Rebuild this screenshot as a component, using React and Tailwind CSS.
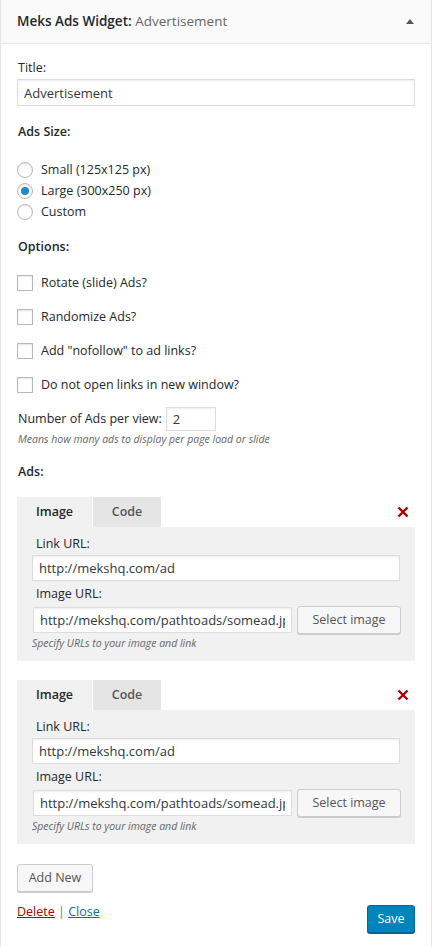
import { useState } from "react";

const font = "font-['Open_Sans','Liberation_Sans',sans-serif]";
const inputCls =
  "border border-[#ddd] bg-white px-[6px] text-[13px] text-[#32373c] shadow-[inset_0_1px_2px_rgba(0,0,0,0.07)] outline-none";

function Radio({ checked, label }) {
  return (
    <label className="flex h-[21px] items-center gap-[8px]">
      <span className="flex h-[16px] w-[16px] items-center justify-center rounded-full border border-[#b4b9be] bg-white shadow-[inset_0_1px_2px_rgba(0,0,0,0.1)]">
        {checked ? <span className="h-[8px] w-[8px] rounded-full bg-[#1e8cbe]" /> : null}
      </span>
      <span>{label}</span>
    </label>
  );
}

function Checkbox({ label }) {
  return (
    <label className="flex h-[34px] items-center gap-[8px]">
      <span className="h-[16px] w-[16px] border border-[#b4b9be] bg-white shadow-[inset_0_1px_2px_rgba(0,0,0,0.1)]" />
      <span>{label}</span>
    </label>
  );
}

function AdBox() {
  return (
    <div className="w-full">
      <div className="flex h-[30px] items-stretch">
        <div className="flex w-[75px] items-center justify-center bg-[#f1f1f1] font-semibold text-[#23282d]">
          Image
        </div>
        <div className="ml-px flex w-[68px] items-center justify-center bg-[#e5e5e5] font-semibold text-[#555]">
          Code
        </div>
        <div className="flex flex-1 items-center justify-end pr-[6px]">
          <svg width="12" height="12" viewBox="0 0 12 12">
            <path d="M1.5 1.5 L10.5 10.5 M10.5 1.5 L1.5 10.5" stroke="#a00" strokeWidth="2.4" />
          </svg>
        </div>
      </div>
      <div className="bg-[#f1f1f1] px-[15px] pb-[10px] pt-[8px]">
        <div className="pl-[4px] leading-[18px]">Link URL:</div>
        <input readOnly value="http://mekshq.com/ad" className={`${inputCls} mt-[2px] h-[26px] w-full`} />
        <div className="mt-[4px] pl-[4px] leading-[18px]">Image URL:</div>
        <div className="mt-[3px] flex items-center gap-[5px] pl-px">
          <input
            readOnly
            value="http://mekshq.com/pathtoads/somead.jpg"
            className={`${inputCls} h-[26px] w-[259px] min-w-0 flex-none`}
          />
          <button className="h-[28px] w-[104px] flex-none rounded-[3px] border border-[#ccc] bg-[#f7f7f7] text-[12.5px] text-[#555] shadow-[0_1px_0_#ccc]">
            Select image
          </button>
        </div>
        <div className="mt-[1px] text-[10.5px] italic leading-[16px] text-[#666]">
          Specify URLs to your image and link
        </div>
      </div>
    </div>
  );
}

export default function App() {
  const [title] = useState("Advertisement");

  return (
    <div className={`${font} min-h-[947px] w-[432px] border-x border-[#e5e5e5] bg-white text-[12.5px] text-[#23282d]`}>
      <div className="flex h-[44px] items-center justify-between border-b border-[#e5e5e5] bg-[#fafafa] pl-[16px] pr-[17px]">
        <h3 className="text-[13.5px] leading-none">
          <span className="font-semibold text-[#23282d]">Meks Ads Widget:</span>{" "}
          <span className="text-[#666]">{title}</span>
        </h3>
        <span className="h-0 w-0 border-x-[4px] border-b-[5px] border-x-transparent border-b-[#555]" />
      </div>

      <div className="px-[16px] leading-[18px]">
        <div className="pl-px pt-[15px]">Title:</div>
        <input readOnly value={title} className={`${inputCls} mt-[2px] h-[27px] w-full`} />

        <div className="mt-[17px] pl-px font-semibold">Ads Size:</div>
        <div className="mt-[18px]">
          <Radio label="Small (125x125 px)" />
          <Radio checked label="Large (300x250 px)" />
          <Radio label="Custom" />
        </div>

        <div className="mt-[16px] pl-px font-semibold">Options:</div>
        <div className="mt-[10px]">
          <Checkbox label="Rotate (slide) Ads?" />
          <Checkbox label="Randomize Ads?" />
          <Checkbox label={'Add "nofollow" to ad links?'} />
          <Checkbox label="Do not open links in new window?" />
        </div>

        <div className="mt-[5px] flex items-center gap-[4px] pl-px">
          <span>Number of Ads per view:</span>
          <input readOnly value="2" className={`${inputCls} h-[24px] w-[50px]`} />
        </div>
        <div className="pl-px text-[10.5px] italic leading-[16px] text-[#666]">
          Means how many ads to display per page load or slide
        </div>

        <div className="mt-[16px] pl-px font-semibold">Ads:</div>

        <div className="mt-[16px]">
          <AdBox />
        </div>
        <div className="mt-[19px]">
          <AdBox />
        </div>

        <button className="mt-[20px] h-[28px] w-[76px] rounded-[3px] border border-[#ccc] bg-[#f7f7f7] text-[12.5px] text-[#555] shadow-[0_1px_0_#ccc]">
          Add New
        </button>

        <div className="mt-[11px] flex items-start justify-between pb-[14px]">
          <div>
            <a href="#" className="text-[#a00] underline">Delete</a>
            <span className="text-[#72777c]"> | </span>
            <a href="#" className="text-[#0073aa] underline">Close</a>
          </div>
          <button className="mt-[2px] h-[28px] w-[48px] rounded-[3px] border border-[#006799] bg-[#0085ba] text-[12.5px] text-white shadow-[0_1px_0_#006799]">
            Save
          </button>
        </div>
      </div>
    </div>
  );
}
